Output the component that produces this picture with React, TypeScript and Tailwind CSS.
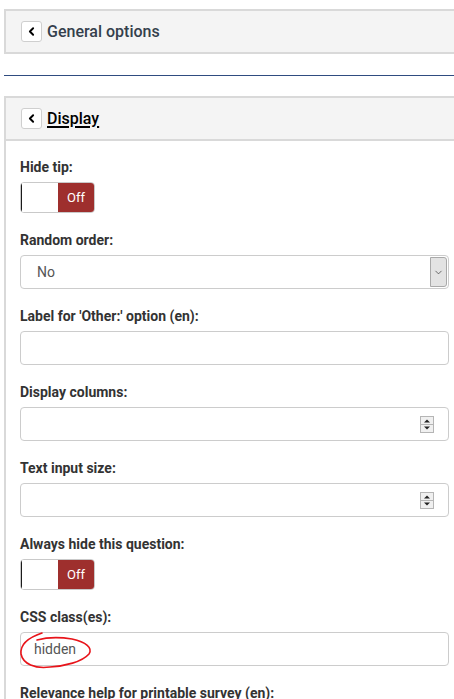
import React from "react";
import { ChevronLeft, ChevronDown } from "lucide-react";

const font = { fontFamily: "Roboto, 'Liberation Sans', sans-serif" };

// Small white square with a chevron, used to collapse a panel
const CollapseButton = () => (
  <button className="flex h-[21px] w-[21px] items-center justify-center rounded-[3px] border border-[#cfcfcf] bg-white">
    <ChevronLeft size={13} strokeWidth={3.5} className="text-black" />
  </button>
);

const Label = ({ children }: { children: React.ReactNode }) => (
  <label className="mb-[5px] block h-5 text-[14px] font-bold leading-5 text-[#333]">{children}</label>
);

const Toggle = () => (
  <div className="mb-[17px] flex h-[31px] w-[75px] overflow-hidden rounded-[4px] border border-[#c9c9c9]">
    <div className="w-[37px] border-l border-l-[#1b1b1b] bg-white" />
    <div className="flex flex-1 items-center justify-center bg-[#9e2f2d] text-[13px] text-white">Off</div>
  </div>
);

const TextInput = ({ value, spinner }: { value?: string; spinner?: boolean }) => (
  <div className="relative mb-[17px] flex h-[34px] items-center rounded-[4px] border border-[#cccccc] bg-white px-[13px] text-[14px] text-[#555]">
    <span className="flex-1">{value}</span>
    {spinner && (
      <svg width="14" height="17" viewBox="0 0 14 17" className="mr-[1px]">
        <rect x="0.5" y="0.5" width="13" height="16" fill="#f0f0f0" stroke="#b5b5b5" />
        <line x1="1" y1="8.5" x2="13" y2="8.5" stroke="#b5b5b5" />
        <path d="M4 6.5 L7 3.5 L10 6.5 Z" fill="#222" />
        <path d="M4 10.5 L7 13.5 L10 10.5 Z" fill="#222" />
      </svg>
    )}
  </div>
);

const Select = () => (
  <div className="mb-[17px] flex h-[34px] items-center rounded-[4px] border border-[#cccccc] bg-white text-[14px] text-[#555]">
    <span className="flex-1 pl-[16px]">No</span>
    <div className="mr-px flex h-[30px] w-[17px] items-center justify-center rounded-r-[3px] border border-[#a9a9a9] bg-[#e3e3e3]">
      <ChevronDown size={11} strokeWidth={1.5} className="text-[#333]" />
    </div>
  </div>
);

export default function App() {
  return (
    <div className="h-[699px] w-[454px] overflow-hidden bg-white pt-[9px]" style={font}>
      {/* General options panel (collapsed) */}
      <div className="ml-[4px] w-[470px] border-y-2 border-l-2 border-[#d9d9d9] bg-[#f4f4f4] px-[15px] py-[10px]">
        <div className="flex h-[21px] items-center gap-[5px]">
          <CollapseButton />
          <span className="text-[16px] font-medium leading-5 text-[#34404c]">General options</span>
        </div>
      </div>

      <hr className="ml-[4px] mt-[21px] border-t border-[#2f4c80]" />

      {/* Display panel */}
      <div className="ml-[4px] mt-[20px] w-[470px] border-l-2 border-t-2 border-[#d9d9d9]">
        <div className="border-b-2 border-[#d9d9d9] bg-[#f4f4f4] px-[15px] py-[10px]">
          <div className="flex h-[21px] items-center gap-[5px]">
            <CollapseButton />
            <span className="text-[16px] font-medium leading-5 text-black underline decoration-[1.5px] underline-offset-2">
              Display
            </span>
          </div>
        </div>
        <div className="w-[443px] pl-[14px] pt-[16px]">
          <Label>Hide tip:</Label>
          <Toggle />

          <Label>Random order:</Label>
          <Select />

          <Label>Label for 'Other:' option (en):</Label>
          <TextInput />

          <Label>Display columns:</Label>
          <TextInput spinner />

          <Label>Text input size:</Label>
          <TextInput spinner />

          <Label>Always hide this question:</Label>
          <Toggle />

          <Label>CSS class(es):</Label>
          <div className="relative">
            <TextInput value="hidden" />
            {/* red pen loop around the class name */}
            <svg
              className="pointer-events-none absolute left-0 top-0 overflow-visible"
              width="80"
              height="40"
              viewBox="0 0 80 40"
            >
              <path
                d="M22 1 C10 5 0 12 1 22 C3 32 15 37 30 35 C45 34 62 30 69 22 C73 16 66 10 52 7 C40 5 28 5 17 8"
                fill="none"
                stroke="#e8141a"
                strokeWidth="1.6"
                strokeLinecap="round"
              />
            </svg>
          </div>

          <Label>Relevance help for printable survey (en):</Label>
        </div>
      </div>
    </div>
  );
}
